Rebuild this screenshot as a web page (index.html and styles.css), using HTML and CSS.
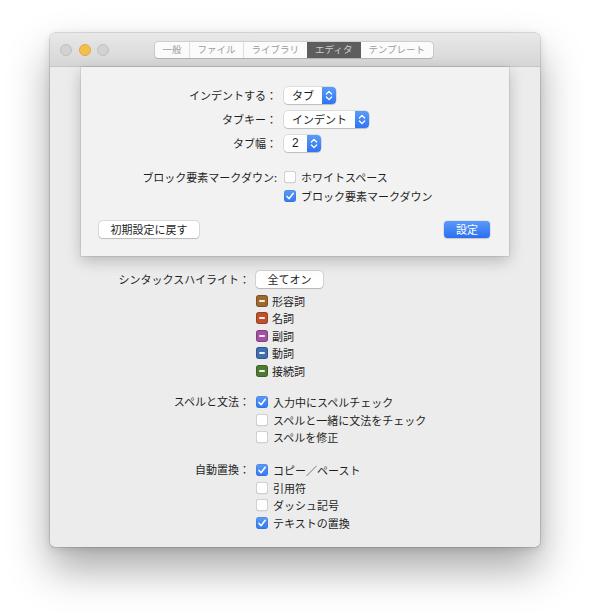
FILE: index.html
```html
<!DOCTYPE html>
<html lang="ja">
<head>
<meta charset="utf-8">
<title>環境設定</title>
<link rel="stylesheet" href="styles.css">
</head>
<body>
<div class="desktop">
  <div class="window">
    <div class="titlebar">
      <div class="lights">
        <span class="light"></span>
        <span class="light light-yellow"></span>
        <span class="light"></span>
      </div>
      <div class="segmented">
        <span class="seg">一般</span>
        <span class="seg">ファイル</span>
        <span class="seg">ライブラリ</span>
        <span class="seg seg-active">エディタ</span>
        <span class="seg">テンプレート</span>
      </div>
    </div>

    <div class="content">
      <div class="group">
        <div class="label label-btn">シンタックスハイライト：</div>
        <div class="controls">
          <button class="btn btn-all">全てオン</button>
          <ul class="list swatch-list">
            <li class="item"><span class="swatch sw-adj"></span>形容詞</li>
            <li class="item"><span class="swatch sw-noun"></span>名詞</li>
            <li class="item"><span class="swatch sw-adv"></span>副詞</li>
            <li class="item"><span class="swatch sw-verb"></span>動詞</li>
            <li class="item"><span class="swatch sw-conj"></span>接続詞</li>
          </ul>
        </div>
      </div>

      <div class="group group-spell">
        <div class="label">スペルと文法：</div>
        <ul class="list">
          <li class="item"><span class="cb cb-on"><svg viewBox="0 0 12 12"><path d="M3 6.4 L5.1 8.7 L9.2 3.3"/></svg></span>入力中にスペルチェック</li>
          <li class="item"><span class="cb"></span>スペルと一緒に文法をチェック</li>
          <li class="item"><span class="cb"></span>スペルを修正</li>
        </ul>
      </div>

      <div class="group group-auto">
        <div class="label">自動置換：</div>
        <ul class="list">
          <li class="item"><span class="cb cb-on"><svg viewBox="0 0 12 12"><path d="M3 6.4 L5.1 8.7 L9.2 3.3"/></svg></span>コピー／ペースト</li>
          <li class="item"><span class="cb"></span>引用符</li>
          <li class="item"><span class="cb"></span>ダッシュ記号</li>
          <li class="item"><span class="cb cb-on"><svg viewBox="0 0 12 12"><path d="M3 6.4 L5.1 8.7 L9.2 3.3"/></svg></span>テキストの置換</li>
        </ul>
      </div>
    </div>

    <div class="sheet">
      <div class="sheet-form">
        <div class="srow">
          <div class="slabel">インデントする：</div>
          <div class="popup"><span class="popup-text">タブ</span><span class="stepper"><svg viewBox="0 0 14 17"><path d="M4.4 7 L7 4.4 L9.6 7 M4.4 10 L7 12.6 L9.6 10"/></svg></span></div>
        </div>
        <div class="srow">
          <div class="slabel">タブキー：</div>
          <div class="popup"><span class="popup-text">インデント</span><span class="stepper"><svg viewBox="0 0 14 17"><path d="M4.4 7 L7 4.4 L9.6 7 M4.4 10 L7 12.6 L9.6 10"/></svg></span></div>
        </div>
        <div class="srow">
          <div class="slabel">タブ幅：</div>
          <div class="popup"><span class="popup-text popup-num">2</span><span class="stepper"><svg viewBox="0 0 14 17"><path d="M4.4 7 L7 4.4 L9.6 7 M4.4 10 L7 12.6 L9.6 10"/></svg></span></div>
        </div>
        <div class="srow srow-check">
          <div class="slabel slabel-check">ブロック要素マークダウン:</div>
          <ul class="list list-sheet">
            <li class="item item-sheet"><span class="cb"></span>ホワイトスペース</li>
            <li class="item item-sheet"><span class="cb cb-on"><svg viewBox="0 0 12 12"><path d="M3 6.4 L5.1 8.7 L9.2 3.3"/></svg></span>ブロック要素マークダウン</li>
          </ul>
        </div>
      </div>
      <div class="sheet-buttons">
        <button class="btn btn-reset">初期設定に戻す</button>
        <button class="btn btn-primary">設定</button>
      </div>
    </div>
  </div>
</div>
</body>
</html>
```

FILE: styles.css
```css
* { box-sizing: border-box; }

html, body {
  margin: 0;
  padding: 0;
  background: #ffffff;
}

body {
  width: 590px;
  height: 613px;
  overflow: hidden;
  font-family: "Noto Sans CJK JP", "Noto Sans", sans-serif;
  font-size: 11px;
  color: #1f1f1f;
}

.desktop {
  padding: 33px 0 0 50px;
}

.window {
  position: relative;
  width: 490px;
  height: 514px;
  border-radius: 5px;
  background: #ececec;
  box-shadow: 0 22px 42px rgba(0, 0, 0, 0.34), 0 0 0 0.5px rgba(0, 0, 0, 0.22), 0 2px 8px rgba(0, 0, 0, 0.12);
  overflow: hidden;
}

/* ---------- title bar ---------- */
.titlebar {
  height: 34px;
  display: flex;
  align-items: center;
  background: linear-gradient(#e8e8e8, #d6d6d6);
  border-bottom: 1px solid #c6c6c6;
}

.lights {
  display: flex;
  gap: 6.5px;
  margin-left: 10px;
}

.light {
  width: 12px;
  height: 12px;
  border-radius: 50%;
  background: #d2d2d2;
  border: 0.5px solid #c0c0c0;
}

.light-yellow {
  background: #f5bf4f;
  border-color: #e2a73e;
}

.segmented {
  display: flex;
  margin-left: 46px;
  margin-top: 1px;
  height: 16px;
  border-radius: 3px;
  background: #fbfbfb;
  box-shadow: 0 0 0 0.5px rgba(0, 0, 0, 0.16), 0 0.5px 1px rgba(0, 0, 0, 0.12);
  overflow: hidden;
}

.seg {
  display: flex;
  align-items: center;
  padding: 0 7.5px;
  font-size: 9.5px;
  color: #9b9b9b;
  border-left: 1px solid #dedede;
  line-height: 1;
}

.seg:first-child { border-left: none; }

.seg-active {
  background: #5d5d5d;
  color: #cfcfcf;
  border-left-color: #5d5d5d;
}

.seg-active + .seg { border-left-color: #5d5d5d; }

/* ---------- main content ---------- */
.content {
  padding-top: 204px;
}

.group {
  display: grid;
  grid-template-columns: 200px auto;
  column-gap: 6px;
}

.group-spell { margin-top: 13.75px; }
.group-auto { margin-top: 15.5px; }

.label {
  text-align: right;
  line-height: 17.5px;
  white-space: nowrap;
}

.label-btn { line-height: 17px; }

.controls {
  display: flex;
  flex-direction: column;
  align-items: flex-start;
}

.list {
  list-style: none;
  margin: 0;
  padding: 0;
}

.swatch-list { margin-top: 4px; }

.item {
  height: 17.5px;
  display: flex;
  align-items: center;
  white-space: nowrap;
}

.btn {
  font-family: inherit;
  font-size: 11px;
  color: #1f1f1f;
  height: 17px;
  padding: 0;
  border: none;
  border-radius: 3.5px;
  background: #ffffff;
  box-shadow: 0 0 0 0.5px rgba(0, 0, 0, 0.2), 0 1px 1px rgba(0, 0, 0, 0.14);
  line-height: 17px;
}

.btn-all { width: 67px; }

.swatch {
  position: relative;
  width: 12px;
  height: 12px;
  border-radius: 3px;
  margin-right: 4px;
  box-shadow: inset 0 0 0 1px rgba(0, 0, 0, 0.22);
}

.swatch::after {
  content: "";
  position: absolute;
  left: 3px;
  top: 5px;
  width: 6px;
  height: 2px;
  border-radius: 1px;
  background: rgba(255, 255, 255, 0.9);
}

.sw-adj { background: #9d6a2c; }
.sw-noun { background: #c0512c; }
.sw-adv { background: #a551a3; }
.sw-verb { background: #3f6fae; }
.sw-conj { background: #4e7b30; }

.cb {
  width: 12px;
  height: 12px;
  border-radius: 3px;
  margin-right: 5px;
  background: #ffffff;
  box-shadow: inset 0 0 0 0.75px rgba(0, 0, 0, 0.24), 0 0.5px 0.5px rgba(0, 0, 0, 0.08);
  flex: none;
  display: flex;
}

.cb-on {
  background: linear-gradient(#5b9bf8, #3279f4);
  box-shadow: inset 0 0 0 0.5px rgba(0, 0, 0, 0.15);
}

.cb svg {
  width: 12px;
  height: 12px;
}

.cb svg path {
  fill: none;
  stroke: #ffffff;
  stroke-width: 1.5;
  stroke-linecap: round;
  stroke-linejoin: round;
}

/* ---------- sheet ---------- */
.sheet {
  position: absolute;
  left: 31px;
  top: 34px;
  width: 428px;
  height: 189px;
  padding-top: 16px;
  background: #f2f2f2;
  box-shadow: 0 5px 14px rgba(0, 0, 0, 0.22), 0 0 0 0.5px rgba(0, 0, 0, 0.14);
}

.sheet-form {
  display: flex;
  flex-direction: column;
}

.srow {
  display: grid;
  grid-template-columns: 196px auto;
  column-gap: 7px;
  align-items: center;
  height: 24px;
}

.srow-check {
  height: auto;
  align-items: start;
  margin-top: 12.5px;
}

.slabel {
  text-align: right;
  white-space: nowrap;
}

.slabel-check { line-height: 19px; }

.item-sheet { height: 19px; }

.popup {
  display: flex;
  align-items: stretch;
  justify-self: start;
  height: 17px;
  border-radius: 4px;
  background: #ffffff;
  box-shadow: 0 0 0 0.5px rgba(0, 0, 0, 0.18), 0 1px 1px rgba(0, 0, 0, 0.14);
  overflow: hidden;
}

.popup-text {
  padding: 0 8px;
  line-height: 17px;
  font-size: 11px;
  color: #1a1a1a;
}

.popup-num {
  font-family: "Liberation Sans", "Noto Sans", sans-serif;
  font-size: 12px;
}

.stepper {
  width: 14px;
  background: linear-gradient(#5c9cf8, #2f74f2);
  display: flex;
}

.stepper svg {
  width: 14px;
  height: 17px;
}

.stepper svg path {
  fill: none;
  stroke: #ffffff;
  stroke-width: 1.3;
  stroke-linecap: round;
  stroke-linejoin: round;
}

.sheet-buttons {
  display: flex;
  justify-content: space-between;
  padding: 0 19px 0 18px;
  margin-top: 15.5px;
}

.btn-reset { width: 100px; }

.btn-primary {
  width: 46px;
  color: #ffffff;
  background: linear-gradient(#5a9af8, #2b6ff1);
  box-shadow: 0 0 0 0.5px rgba(0, 0, 0, 0.12), 0 1px 1px rgba(0, 0, 0, 0.12);
}
```
